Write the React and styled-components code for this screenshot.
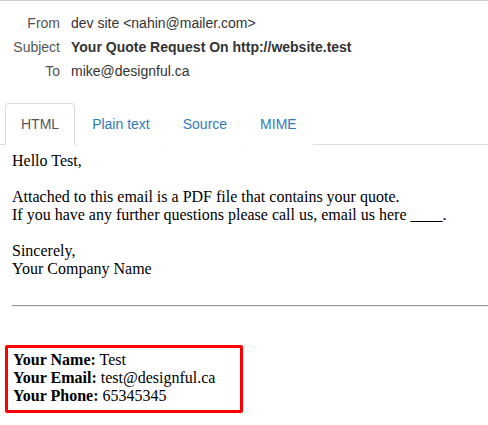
import React from 'react'
import styled, { createGlobalStyle } from 'styled-components'

const GlobalStyle = createGlobalStyle`
  body {
    margin: 0;
    background: #fff;
  }
`

const Page = styled.div`
  width: 488px;
  border-top: 1px solid #cccccc;
  font-family: 'Liberation Sans', Arial, sans-serif;
`

const Headers = styled.div`
  display: flex;
  flex-direction: column;
  gap: 4px;
  padding: 12px 0 0;
`

const HeaderRow = styled.div`
  display: flex;
  align-items: center;
  gap: 11px;
  font-size: 14px;
  line-height: 20px;
`

const Label = styled.span`
  width: 60px;
  text-align: right;
  color: #555555;
`

const Value = styled.span`
  color: #333333;
  font-weight: ${(p) => (p.$bold ? 'bold' : 'normal')};
`

const Tabs = styled.ul`
  display: flex;
  list-style: none;
  margin: 22px 0 0;
  padding: 0 0 0 5px;
  border-bottom: 1px solid #dddddd;
`

const Tab = styled.li`
  margin: 0 1px -1px 0;
  padding: 10px 15px;
  font-size: 14px;
  line-height: 20px;
  border: 1px solid ${(p) => (p.$active ? '#dddddd' : 'transparent')};
  border-bottom-color: ${(p) => (p.$active ? '#ffffff' : 'transparent')};
  border-radius: 4px 4px 0 0;
  background: #fff;
  color: ${(p) => (p.$active ? '#555555' : '#337ab7')};
  cursor: pointer;
`

const Content = styled.div`
  padding: 7px 0 0 5px;
  font-family: 'Liberation Serif', 'Times New Roman', serif;
  font-size: 16px;
  line-height: 18px;
  color: #000;
`

const Letter = styled.div`
  margin-left: 7px;
`

const Para = styled.p`
  margin: 0 0 ${(p) => (p.$last ? '0' : '18px')};
`

const Rule = styled.hr`
  margin: 27px 0 38px 7px;
  height: 0;
  border: 0;
  border-top: 1px solid #9a9a9a;
  border-bottom: 1px solid #eeeeee;
`

const Details = styled.div`
  width: 238px;
  box-sizing: border-box;
  border: 3px solid #ff0000;
  border-radius: 2px;
  padding: 3px 5px 5px;
`

const Field = styled.div`
  b {
    font-weight: bold;
  }
`

const tabs = ['HTML', 'Plain text', 'Source', 'MIME']

export default function App() {
  return (
    <>
      <GlobalStyle />
      <Page>
        <Headers>
          <HeaderRow>
            <Label>From</Label>
            <Value>dev site &lt;nahin@mailer.com&gt;</Value>
          </HeaderRow>
          <HeaderRow>
            <Label>Subject</Label>
            <Value $bold>Your Quote Request On http://website.test</Value>
          </HeaderRow>
          <HeaderRow>
            <Label>To</Label>
            <Value>mike@designful.ca</Value>
          </HeaderRow>
        </Headers>
        <Tabs>
          {tabs.map((t, i) => (
            <Tab key={t} $active={i === 0}>
              {t}
            </Tab>
          ))}
        </Tabs>
        <Content>
          <Letter>
            <Para>Hello Test,</Para>
            <Para>
              Attached to this email is a PDF file that contains your quote.
              <br />
              If you have any further questions please call us, email us here ____.
            </Para>
            <Para $last>
              Sincerely,
              <br />
              Your Company Name
            </Para>
          </Letter>
          <Rule />
          <Details>
            <Field>
              <b>Your Name:</b> Test
            </Field>
            <Field>
              <b>Your Email:</b> test@designful.ca
            </Field>
            <Field>
              <b>Your Phone:</b> 65345345
            </Field>
          </Details>
        </Content>
      </Page>
    </>
  )
}
